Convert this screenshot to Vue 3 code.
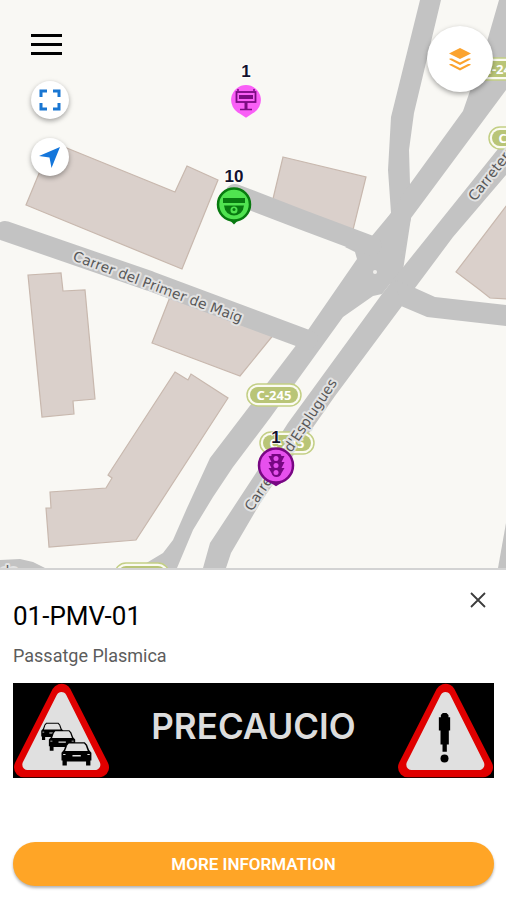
<template>
  <div class="app-screen">
    <main class="map-area">
      <svg class="map-canvas" viewBox="0 0 506 568" preserveAspectRatio="xMidYMin slice" role="img" aria-label="Street map">
        <defs>
          <path id="path-maig" d="M72 260 L270 334" />
          <path id="path-esplugues" d="M252 512 L352 361" />
          <path id="path-carretera" d="M475 202 L565 88" />
        </defs>

        <g class="buildings">
          <polygon v-for="(points, i) in buildings" :key="i" :points="points" />
        </g>

        <g class="roads">
          <polygon v-for="(points, i) in roads" :key="i" :points="points" />
          <path class="road-line" d="M235 194 L300 219 L372 246" />
          <path class="road-line" d="M5 231 L150 281 L308 340" />
        </g>
        <circle class="island" cx="375" cy="272" r="2" />

        <g v-for="(s, i) in shields" :key="'s' + i" class="shield">
          <rect class="shield-outer" :x="s.x - 27" :y="s.y - 11" width="54" height="22" rx="11" />
          <rect class="shield-inner" :x="s.x - 24" :y="s.y - 8" width="48" height="16" rx="8" />
          <text :x="s.x" :y="s.y + 5">C-245</text>
        </g>

        <g class="street-names">
          <text><textPath href="#path-maig">Carrer del Primer de Maig</textPath></text>
          <text><textPath href="#path-esplugues">Carretera d'Esplugues</textPath></text>
          <text><textPath href="#path-carretera">Carretera</textPath></text>
          <text x="-8" y="576">ada</text>
        </g>

        <!-- message panel -->
        <g class="marker">
          <path d="M246 85 a15 15 0 0 1 6 28.700 l-6 4 l-6 -4 a15 15 0 0 1 6 -28.700z" fill="#f95ff6" />
          <g fill="none" stroke="#7b0b82">
            <rect x="236.500" y="92" width="19" height="10" stroke-width="1.800" />
            <path d="M239 97 h14" stroke-width="4" />
            <path d="M246 102 v8" stroke-width="3" />
            <path d="M240 109.500 h12 M238 91 v-2 M254 91 v-2" stroke-width="1.500" />
          </g>
          <text x="246" y="77">1</text>
        </g>

        <!-- camera -->
        <g class="marker">
          <path d="M230 219 l4 4 l4 -4z" fill="#087a10" stroke="#087a10" stroke-width="2" />
          <circle cx="234" cy="204.500" r="16" fill="#50e350" stroke="#087a10" stroke-width="2.500" />
          <rect x="223" y="198" width="22" height="5" fill="#087a10" />
          <path d="M224 205.500 h20 q-1 9 -10 10 q-9 -1 -10 -10z" fill="#087a10" />
          <circle cx="234" cy="210" r="3.500" fill="#50e350" />
          <circle cx="234" cy="209.500" r="1.500" fill="#087a10" />
          <text x="234" y="182">10</text>
        </g>

        <!-- traffic light -->
        <g class="marker">
          <path d="M271 482 l5 3 l5 -3z" fill="#780783" stroke="#780783" stroke-width="2" />
          <circle cx="276" cy="465.500" r="17" fill="#e650ed" stroke="#780783" stroke-width="2.500" />
          <path d="M271.500 454 h9 l1 2 h3 l-3 6 h3 l-3 6 h3 l-3 5 q-1 4 -5 4 q-4 0 -5 -4 l-3 -5 h3 l-3 -6 h3 l-3 -6 h3z" fill="#780783" />
          <circle cx="276" cy="458.500" r="2.500" fill="#e650ed" />
          <circle cx="276" cy="465.500" r="2.500" fill="#e650ed" />
          <circle cx="276" cy="472.500" r="2.500" fill="#e650ed" />
          <text x="276" y="443">1</text>
        </g>
      </svg>

      <div class="map-controls">
        <div class="left-controls">
          <button class="menu-btn" type="button" aria-label="Menu">
            <span class="bar"></span>
            <span class="bar"></span>
            <span class="bar"></span>
          </button>
          <button class="round-btn" type="button" aria-label="Fullscreen">
            <svg width="22" height="22" viewBox="0 0 22 22">
              <path d="M2 8 V2 H8 M14 2 H20 V8 M20 14 V20 H14 M8 20 H2 V14" fill="none" stroke="#1976d2" stroke-width="3" />
            </svg>
          </button>
          <button class="round-btn" type="button" aria-label="My location">
            <svg width="22" height="22" viewBox="0 0 22 22">
              <path d="M21 1 L12.500 22 L10.500 11.500 L0 10z" fill="#1476db" />
            </svg>
          </button>
        </div>
        <button class="layers-btn" type="button" aria-label="Layers">
          <svg width="22" height="23" viewBox="0 0 22 23">
            <path d="M11 0 L22 5.500 L11 11 L0 5.500z" fill="#fba32d" />
            <path d="M0.500 10.500 L3 10.500 L11 14.500 L19 10.500 L21.500 10.500 V11.500 L11 17 L0.500 11.500z" fill="#fba32d" />
            <path d="M0.500 16 L3 16 L11 20 L19 16 L21.500 16 V17 L11 22.500 L0.500 17z" fill="#fba32d" />
          </svg>
        </button>
      </div>
    </main>

    <section class="detail-sheet">
      <header class="sheet-header">
        <h1 class="sheet-title">01-PMV-01</h1>
        <button class="close-btn" type="button" aria-label="Close">
          <svg width="16" height="16" viewBox="0 0 16 16">
            <path d="M1 1 L15 15 M15 1 L1 15" fill="none" stroke="#3c3c3c" stroke-width="1.800" />
          </svg>
        </button>
      </header>
      <p class="sheet-subtitle">Passatge Plasmica</p>

      <div class="panel">
        <svg class="panel-sign" viewBox="0 0 290 286">
          <polygon class="sign-border" points="145,32 258,254 32,254" />
          <polygon class="sign-face" points="145,43 246,246 43,246" />
          <g v-for="car in cars" :key="car" :transform="car">
            <path d="M20 0 H70 L77 8 L83 24 L90 32 V55 H87 V70 H74 V58 H16 V70 H3 V55 H0 V32 L7 24 L13 8z" fill="#000" />
            <path d="M22 4 H68 L73 10 L79 27 H11 L17 10z" fill="#e0e0e0" />
            <path d="M33 39 H58 V43 H33z M5 36 h7 v3 h-7z M78 36 h7 v3 h-7z" fill="#e0e0e0" />
          </g>
        </svg>
        <span class="panel-text">PRECAUCIO</span>
        <svg class="panel-sign" viewBox="0 0 290 286">
          <polygon class="sign-border" points="145,32 258,254 32,254" />
          <polygon class="sign-face" points="145,43 246,246 43,246" />
          <path d="M131 96 L137 90 H148 L154 96 V103 H159 V143 H155 V185 H149 V207 H136 V185 H130 V143 H125 V103 H131z" />
          <circle cx="142" cy="227" r="12" />
        </svg>
      </div>

      <button class="more-btn" type="button">MORE INFORMATION</button>
    </section>
  </div>
</template>

<script setup>
const buildings = [
  '52,142 175,192 187,166 218,180 182,269 26,205',
  '283,157 366,177 351,238 272,203',
  '510,201 456,272 480,290 490,298 510,299',
  '28,275 61,273 63,291 85,290 95,399 73,401 74,414 42,417',
  '170,297 152,343 240,376 275,333',
  '175,372 188,380 191,374 228,398 136,540 49,547 46,508 51,508 50,492 106,488 112,478 108,475'
]

const roads = [
  '420,0 391,117 388,170 391,213 357,262 400,290 411,218 410,184 409,150 414,113 441,0',
  '499,0 486,45 463,111 410,184 391,213 371,237 345,247 355,252 357,259 308,330 294,348 252,403 210,458 187,508 173,540 163,553 138,568 177,568 193,530 213,497 233,467 270,418 343,317 373,296 382,294 397,275 411,218 506,90 506,0',
  '506,139 396,276 382,294 288,423 258,470 210,543 203,568 226,568 231,553 262,500 335,396 402,306 415,288 453,237 506,175',
  '395,280 415,288 435,297 506,305 506,326 427,317 401,306',
  '0,560 20,559 33,562 45,568 0,568',
  '506,523 498,568 506,568'
]

const shields = [
  { x: 274, y: 395 },
  { x: 287, y: 443 },
  { x: 142, y: 574 },
  { x: 516, y: 138 },
  { x: 501, y: 69 }
]

const cars = [
  'translate(84 120) scale(0.74)',
  'translate(107 142) scale(0.88)',
  'translate(145 178)'
]
</script>

<style>
body {
  margin: 0;
}
</style>

<style scoped>
.app-screen {
  min-height: 100vh;
  display: flex;
  flex-direction: column;
  background: #fff;
  font-family: Roboto, "Liberation Sans", sans-serif;
}

button {
  border: none;
  padding: 0;
  cursor: pointer;
  font-family: inherit;
}

.map-area {
  position: relative;
  flex: 1;
  min-height: 320px;
  overflow: hidden;
  background: #f9f8f4;
}

.map-canvas {
  position: absolute;
  inset: 0;
  width: 100%;
  height: 100%;
}

.buildings polygon {
  fill: #dad0cb;
  stroke: #c8b8ae;
  stroke-width: 1.2;
}

.roads polygon {
  fill: #c3c3c3;
}

.road-line {
  fill: none;
  stroke: #c3c3c3;
  stroke-width: 20;
  stroke-linecap: round;
  stroke-linejoin: round;
}

.island {
  fill: #f0efec;
}

.shield-outer {
  fill: #fbfbf2;
  stroke: #c3cf85;
  stroke-width: 1.5;
}

.shield-inner {
  fill: #b9c577;
}

.shield text {
  fill: #fff;
  font-family: "Noto Sans", sans-serif;
  font-size: 13px;
  font-weight: 700;
  text-anchor: middle;
}

.street-names text {
  fill: #585858;
  stroke: #e2e2e2;
  stroke-width: 4;
  stroke-linejoin: round;
  paint-order: stroke;
  font-family: "DejaVu Sans", sans-serif;
  font-size: 14px;
}

.marker text {
  fill: #12122e;
  stroke: #fff;
  stroke-width: 1.5;
  paint-order: stroke;
  font-family: "Liberation Sans", sans-serif;
  font-size: 17px;
  font-weight: 700;
  text-anchor: middle;
}

.map-controls {
  position: relative;
  display: flex;
  justify-content: space-between;
  align-items: flex-start;
  padding: 26px 13px 0 31px;
}

.left-controls {
  display: flex;
  flex-direction: column;
  gap: 19px;
}

.menu-btn {
  width: 31px;
  height: 36px;
  display: flex;
  flex-direction: column;
  justify-content: center;
  gap: 6px;
  background: transparent;
}

.bar {
  height: 3px;
  background: #000;
}

.round-btn,
.layers-btn {
  display: flex;
  align-items: center;
  justify-content: center;
  border-radius: 50%;
  background: #fff;
  box-shadow: 0 2px 5px rgba(0, 0, 0, 0.35);
}

.round-btn {
  width: 38px;
  height: 38px;
}

.layers-btn {
  width: 66px;
  height: 66px;
}

.detail-sheet {
  display: flex;
  flex-direction: column;
  padding: 16px 12px 14px 13px;
  border-top: 2px solid #d3d3d3;
  background: #fff;
}

.sheet-header {
  display: flex;
  align-items: flex-start;
  justify-content: space-between;
}

.sheet-title {
  margin: 16px 0 0;
  font-size: 26px;
  line-height: 28px;
  font-weight: 400;
  color: #000;
}

.close-btn {
  width: 32px;
  height: 28px;
  display: flex;
  align-items: center;
  justify-content: center;
  background: transparent;
}

.sheet-subtitle {
  margin: 14px 0 15px;
  font-size: 18px;
  line-height: 24px;
  color: #5c5c5c;
}

.panel {
  height: 95px;
  display: flex;
  align-items: center;
  justify-content: space-between;
  background: #000;
}

.panel-sign {
  flex: none;
  width: 97px;
  height: 95px;
}

.sign-border {
  fill: #e00000;
  stroke: #e00000;
  stroke-width: 60;
  stroke-linejoin: round;
}

.sign-face {
  fill: #e0e0e0;
  stroke: #e0e0e0;
  stroke-width: 32;
  stroke-linejoin: round;
}

.panel-text {
  padding-bottom: 10px;
  font-family: Inter, "Liberation Sans", sans-serif;
  font-size: 35px;
  line-height: 40px;
  font-weight: 600;
  color: #ddd;
}

.more-btn {
  height: 44px;
  margin-top: 64px;
  border-radius: 22px;
  background: #ffa526;
  box-shadow: 0 2px 3px rgba(0, 0, 0, 0.3);
  color: #fff;
  font-size: 17px;
  font-weight: 600;
}
</style>
